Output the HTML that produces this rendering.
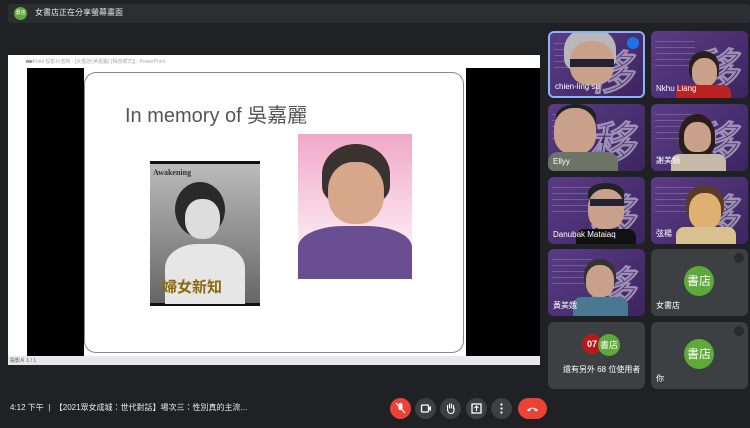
<!DOCTYPE html><html><head><meta charset="utf-8"><style>
*{margin:0;padding:0;box-sizing:border-box}
body{width:750px;height:428px;background:#202124;position:relative;overflow:hidden;font-family:"Liberation Sans","Noto Sans CJK TC",sans-serif;color:#e8eaed}
.a{position:absolute}
.tile{position:absolute;width:97px;height:67px;border-radius:6px;overflow:hidden;background:#4b3173}
.tile .bg{position:absolute;inset:0;background:linear-gradient(135deg,#5a3c86,#3d2560)}
.tile .lines{position:absolute;left:4px;top:10px;width:40px;height:30px;background:repeating-linear-gradient(#8a75a8 0 1px,transparent 1px 6px);opacity:.6}
.tile .deco{position:absolute;right:6px;top:4px;font:bold 46px "Liberation Serif",serif;color:#1d1030;opacity:.6;transform:skewX(-10deg);-webkit-text-stroke:1px #d8d0e8}
.face{position:absolute;border-radius:45% 45% 40% 40%;background:#c9a089}
.hair{position:absolute;border-radius:50% 50% 30% 30%}
.name{position:absolute;left:5px;bottom:5px;font-size:8px;color:#fff}
.gray{background:#3c4043}
.av{position:absolute;width:30px;height:30px;border-radius:50%;background:#5fa83a;color:#fff;font-size:12px;text-align:center;line-height:30px}
.btn{position:absolute;top:398px;width:21px;height:21px;border-radius:50%;background:#3c4043}
.mute{position:absolute;right:4px;top:4px;width:10px;height:10px;border-radius:50%;background:#2a2b2e}
</style></head><body>
<div class="a" style="left:8px;top:4px;width:742px;height:19px;background:#2d2e31;border-radius:4px"></div>
<div class="a" style="left:14px;top:7px;width:13px;height:13px;border-radius:50%;background:#5fa83a;font-size:5px;color:#fff;text-align:center;line-height:13px">書店</div>
<div class="a" style="left:35px;top:7px;font-size:8px;color:#e8eaed">女書店正在分享螢幕畫面</div>

<div class="a" style="left:8px;top:55px;width:532px;height:310px;background:#fff"></div>
<div class="a" style="left:26px;top:58px;font-size:5px;color:#aaa"><b style="color:#555">we</b>Point 投影片放映 - [女書店(吳嘉麗) [相容模式]] - PowerPoint</div>
<div class="a" style="left:27px;top:68px;width:57px;height:288px;background:#000"></div>
<div class="a" style="left:466px;top:68px;width:74px;height:288px;background:#000"></div>
<div class="a" style="left:84px;top:72px;width:380px;height:281px;border:1px solid #888;border-radius:12px;background:#fff"></div>
<div class="a" style="left:125px;top:99px;font-size:20px;color:#555">In memory of 吳嘉麗</div>
<div class="a" style="left:150px;top:161px;width:110px;height:145px;background:linear-gradient(#bbb,#888 60%,#666);border-top:3px solid #111;border-bottom:3px solid #111">
<div class="a" style="left:3px;top:4px;font:bold 8px 'Liberation Serif',serif;color:#333">Awakening</div>
<div class="a" style="left:25px;top:18px;width:50px;height:55px;border-radius:50%;background:#2a2a2a"></div>
<div class="a" style="left:35px;top:35px;width:35px;height:40px;border-radius:45%;background:#ddd"></div>
<div class="a" style="left:15px;top:80px;width:80px;height:60px;border-radius:40% 40% 0 0;background:#e6e6e6"></div>
<div class="a" style="left:12px;top:112px;font:bold 15px 'Noto Sans CJK TC',sans-serif;color:#8a6a10">婦女新知</div>
</div>
<div class="a" style="left:298px;top:134px;width:114px;height:145px;background:linear-gradient(#f0a8c8,#fbe4ee 70%)">
<div class="a" style="left:24px;top:10px;width:68px;height:60px;border-radius:50% 50% 30% 30%;background:#3a3230"></div>
<div class="a" style="left:30px;top:28px;width:56px;height:62px;border-radius:45%;background:#d8a68a"></div>
<div class="a" style="left:0;top:92px;width:114px;height:53px;border-radius:40% 40% 0 0;background:#6a4e92"></div>
</div>
<div class="a" style="left:8px;top:356px;width:532px;height:9px;background:#e8e8e8;font-size:5px;color:#555;padding:1px 2px">投影片 1 / 1</div>

<div class="tile" style="left:548px;top:31px;border:2px solid #8ab4f8"><div class="bg"></div><div class="lines"></div><div class="deco">移</div>
<div class="hair" style="left:14px;top:-6px;width:52px;height:45px;background:#b8b8b8"></div><div class="face" style="left:20px;top:8px;width:44px;height:44px"></div><div class="a" style="left:20px;top:26px;width:44px;height:8px;background:#223"></div>
<div class="a" style="right:4px;top:4px;width:12px;height:12px;border-radius:50%;background:#1a73e8"></div><div class="name">chien-ling su</div></div>
<div class="tile" style="left:651px;top:31px"><div class="bg"></div><div class="lines"></div><div class="deco">移</div>
<div class="hair" style="left:38px;top:20px;width:30px;height:30px;background:#2b2020"></div><div class="face" style="left:41px;top:27px;width:25px;height:28px"></div><div class="a" style="left:25px;top:54px;width:55px;height:14px;background:#b22;border-radius:8px 8px 0 0"></div><div class="name">Nkhu Liang</div></div>
<div class="tile" style="left:548px;top:104px"><div class="bg"></div><div class="lines"></div><div class="deco">移</div>
<div class="hair" style="left:8px;top:0;width:40px;height:25px;background:#222"></div><div class="face" style="left:6px;top:4px;width:42px;height:46px"></div><div class="a" style="left:0;top:48px;width:70px;height:20px;background:#6d7466;border-radius:10px 10px 0 0"></div><div class="name">Ellyy</div></div>
<div class="tile" style="left:651px;top:104px"><div class="bg"></div><div class="lines"></div><div class="deco">移</div>
<div class="hair" style="left:28px;top:10px;width:36px;height:42px;background:#2a1e1a"></div><div class="face" style="left:33px;top:18px;width:27px;height:30px"></div><div class="a" style="left:20px;top:50px;width:55px;height:18px;background:#c7b9a8;border-radius:8px 8px 0 0"></div><div class="name">謝美娟</div></div>
<div class="tile" style="left:548px;top:177px"><div class="bg"></div><div class="lines"></div><div class="deco">移</div>
<div class="hair" style="left:40px;top:6px;width:36px;height:20px;background:#222"></div><div class="face" style="left:40px;top:12px;width:36px;height:40px"></div><div class="a" style="left:42px;top:22px;width:34px;height:7px;background:#223"></div><div class="a" style="left:28px;top:52px;width:60px;height:16px;background:#111;border-radius:8px 8px 0 0"></div><div class="name">Danubak Mataiaq</div></div>
<div class="tile" style="left:651px;top:177px"><div class="bg"></div><div class="lines"></div><div class="deco">移</div>
<div class="hair" style="left:35px;top:8px;width:38px;height:34px;background:#5a3a2a"></div><div class="face" style="left:38px;top:16px;width:32px;height:36px;background:#e0b070"></div><div class="a" style="left:25px;top:50px;width:60px;height:18px;background:#d8c090;border-radius:8px 8px 0 0"></div><div class="name">弦楊</div></div>
<div class="tile" style="left:548px;top:249px"><div class="bg"></div><div class="lines"></div><div class="deco">移</div>
<div class="hair" style="left:36px;top:10px;width:32px;height:30px;background:#333"></div><div class="face" style="left:38px;top:16px;width:28px;height:32px"></div><div class="a" style="left:25px;top:48px;width:55px;height:20px;background:#4a7890;border-radius:8px 8px 0 0"></div><div class="name">黃美娥</div></div>
<div class="tile gray" style="left:651px;top:249px"><div class="mute"></div><div class="av" style="left:33px;top:17px">書店</div><div class="name">女書店</div></div>
<div class="tile gray" style="left:548px;top:322px"><div class="a" style="left:34px;top:12px;width:20px;height:20px;border-radius:50%;background:#b81818;color:#fff;font:bold 9px sans-serif;text-align:center;line-height:20px">07</div><div class="av" style="left:50px;top:12px;width:22px;height:22px;line-height:22px;font-size:9px">書店</div><div class="a" style="left:15px;top:42px;font-size:8px;color:#fff">還有另外 68 位使用者</div></div>
<div class="tile gray" style="left:651px;top:322px"><div class="mute"></div><div class="av" style="left:33px;top:17px">書店</div><div class="name">你</div></div>

<div class="a" style="left:10px;top:402px;font-size:8px;color:#e8eaed">4:12 下午 &nbsp;|&nbsp; 【2021眾女成城：世代對話】場次三：性別真的主流...</div>
<div class="btn" style="left:390px;background:#ea4335"><svg width="21" height="21" viewBox="0 0 21 21"><rect x="8.5" y="5" width="4" height="7" rx="2" fill="#fff"/><line x1="6" y1="5" x2="15" y2="15" stroke="#fff" stroke-width="1.2"/></svg></div>
<div class="btn" style="left:415px"><svg width="21" height="21" viewBox="0 0 21 21"><rect x="6.5" y="7" width="7" height="7" rx="1" fill="none" stroke="#fff" stroke-width="1.3"/><path d="M13.5 9.5l2.5-1.5v5l-2.5-1.5" fill="#fff"/></svg></div>
<div class="btn" style="left:440px"><svg width="21" height="21" viewBox="0 0 21 21"><path d="M7.5 11V7.5M9.5 10V6M11.5 10V6M13.5 10.5V7.5M7.5 11c0 3 1.5 4.5 3.5 4.5s3-1.5 3-3.5v-2" fill="none" stroke="#fff" stroke-width="1.1" stroke-linecap="round"/></svg></div>
<div class="btn" style="left:466px"><svg width="21" height="21" viewBox="0 0 21 21"><rect x="6" y="6" width="9" height="9" fill="none" stroke="#fff" stroke-width="1.3"/><path d="M10.5 8v5M8.5 10l2-2 2 2" stroke="#fff" stroke-width="1.1" fill="none"/></svg></div>
<div class="btn" style="left:491px"><svg width="21" height="21" viewBox="0 0 21 21"><circle cx="10.5" cy="6.5" r="1.1" fill="#fff"/><circle cx="10.5" cy="10.5" r="1.1" fill="#fff"/><circle cx="10.5" cy="14.5" r="1.1" fill="#fff"/></svg></div>
<div class="btn" style="left:518px;width:29px;border-radius:11px;background:#ea4335"><svg width="29" height="21" viewBox="0 0 29 21"><path d="M9 12c3-3 8-3 11 0l-1.5 1.5-2-1v-1.5c-1.5-.5-2.5-.5-4 0v1.5l-2 1z" fill="#fff"/></svg></div>
</body></html>
